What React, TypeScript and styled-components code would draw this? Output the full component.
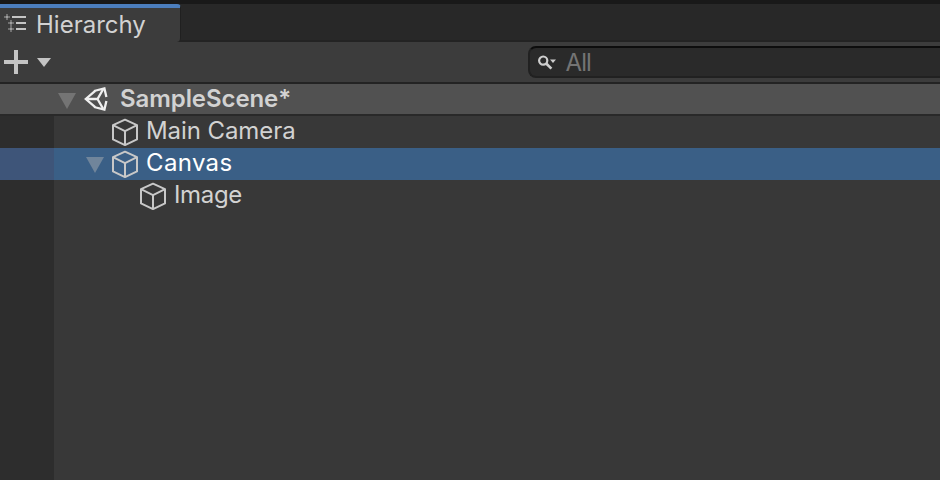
import React from 'react';
import styled, { createGlobalStyle } from 'styled-components';

const GlobalStyle = createGlobalStyle`
  * { box-sizing: border-box; }
  body { margin: 0; background: #383838; overflow: hidden; }
`;

const Panel = styled.div`
  display: flex;
  flex-direction: column;
  width: 940px;
  height: 480px;
  overflow: hidden;
  background: #383838;
  color: #d2d2d2;
  font: 24px/32px Inter, sans-serif;
  white-space: nowrap;
  svg { display: block; flex: none; }
`;

const TabStrip = styled.div`
  display: flex;
  height: 42px;
  flex: none;
  padding-top: 4px;
  background: linear-gradient(#191919 4px, #282828 4px, #282828 40px, #232323 40px);
`;

const Tab = styled.div`
  display: flex;
  align-items: center;
  width: 181px;
  height: 38px;
  padding-left: 4px;
  border-top: 4px solid #4c7ebd;
  border-right: 1px solid #202020;
  border-radius: 0 4px 4px 0;
  background: #3c3c3c;
`;

const Label = styled.span<{ $spacing?: number; $gap?: number; $shift?: number; $bold?: boolean; $color?: string }>`
  margin-left: ${p => p.$gap ?? 0}px;
  margin-top: ${p => p.$shift ?? 0}px;
  letter-spacing: ${p => p.$spacing ?? 0}px;
  font-weight: ${p => (p.$bold ? 600 : 400)};
  color: ${p => p.$color ?? 'inherit'};
`;

const Toolbar = styled.div`
  display: flex;
  justify-content: space-between;
  height: 42px;
  flex: none;
  padding: 4px 0 0 4px;
  border-bottom: 2px solid #232323;
  background: #3c3c3c;
`;

const AddButton = styled.div`
  display: flex;
  align-items: center;
  gap: 9px;
  height: 32px;
`;

const SearchField = styled.div`
  display: flex;
  align-items: center;
  width: 412px;
  height: 32px;
  padding-left: 8px;
  border: 2px solid #212121;
  border-top-color: #0d0d0d;
  border-right: 0;
  border-radius: 8px 0 0 8px;
  background: #2a2a2a;
`;

const SceneRow = styled.div`
  display: flex;
  align-items: center;
  height: 32px;
  flex: none;
  padding-left: 58px;
  border-bottom: 2px solid #292929;
  background: #515151;
`;

const Tree = styled.div`
  flex: 1;
  background: linear-gradient(90deg, #2d2d2d 54px, #383838 54px);
`;

const TreeRow = styled.div<{ $indent: number; $selected?: boolean }>`
  display: flex;
  align-items: center;
  height: 32px;
  padding-left: ${p => p.$indent}px;
  background: ${p => (p.$selected ? 'linear-gradient(90deg, #3e5579 54px, #3a5f86 54px)' : 'transparent')};
`;

const HierarchyIcon = () => (
  <svg width="24" height="20" viewBox="0 0 24 20">
    <g fill="#c4c4c4">
      <path d="M8 4h14v2H8zM12 10h10v2H12zM12 16h10v2H12z" />
      <path d="M2 2h2v6H2zM0 4h6v2H0zM6 8h2v12H6zM4 10h6v2H4zM4 16h6v2H4z" opacity=".4" />
      <path d="M2 4h2v2H2zM6 10h2v2H6zM6 16h2v2H6z" opacity=".55" />
    </g>
  </svg>
);

const PlusIcon = () => (
  <svg width="24" height="24" viewBox="0 0 24 24"><path d="M10 0h4v10h10v4H14v10h-4V14H0v-4h10z" fill="#c4c4c4" /></svg>
);

const MenuArrow = () => (
  <svg width="14" height="9" viewBox="0 0 14 9"><path d="M0 0h14L7 9z" fill="#c4c4c4" /></svg>
);

const SearchIcon = () => (
  <svg width="20" height="16" viewBox="0 0 20 16">
    <circle cx="5.2" cy="5.6" r="4.1" fill="none" stroke="#cecece" strokeWidth="2.2" />
    <path d="m8.2 8.5 5.2 5.2" stroke="#cecece" strokeWidth="2.6" />
    <path d="M12 4.5h6l-3 3.6z" fill="#cecece" />
  </svg>
);

const FoldArrow = ({ color }: { color: string }) => (
  <svg width="18" height="16" viewBox="0 0 18 16"><path d="M0 0h18L9 16z" fill={color} /></svg>
);

const UnityIcon = () => (
  <svg width="24" height="24" viewBox="0 0 24 24">
    <g fill="none" stroke="#f0f0f0" strokeWidth="2.3" strokeLinejoin="miter">
      <path d="M10 4 20.4 1.5 22.4 10M22.4 14l-2 8.5L10 20" />
      <path d="M11.2 3.8 1.8 12l9.4 8.2" />
      <path d="M2 12h11.5L19 2.5M13.5 12l5.5 9.5" />
    </g>
  </svg>
);

const CubeIcon = () => (
  <svg width="28" height="28" viewBox="0 0 28 28">
    <path d="M14 1.7 26 7.2v14.2L14 27.1 2 21.4V7.2zM2 7.2l12 6 12-6M14 13.2v13.9" fill="none" stroke="#c8c8c8" strokeWidth="2" strokeLinejoin="round" />
  </svg>
);

const IconSlot = styled.span<{ $gap?: number; $shift?: number }>`
  display: block;
  margin-left: ${p => p.$gap ?? 0}px;
  margin-top: ${p => p.$shift ?? 0}px;
`;

export default function App() {
  return (
    <Panel>
      <GlobalStyle />
      <TabStrip>
        <Tab>
          <IconSlot $shift={-6}><HierarchyIcon /></IconSlot>
          <Label $gap={8}>Hierarchy</Label>
        </Tab>
      </TabStrip>
      <Toolbar>
        <AddButton><PlusIcon /><MenuArrow /></AddButton>
        <SearchField>
          <IconSlot $shift={2}><SearchIcon /></IconSlot>
          <Label $gap={7.5} $shift={2} $spacing={-0.9} $color="#747474">All</Label>
        </SearchField>
      </Toolbar>
      <SceneRow>
        <IconSlot $shift={3}><FoldArrow color="#747474" /></IconSlot>
        <IconSlot $gap={8}><UnityIcon /></IconSlot>
        <Label $gap={12} $spacing={-0.08} $bold>SampleScene*</Label>
      </SceneRow>
      <Tree>
        <TreeRow $indent={111}>
          <CubeIcon />
          <Label $gap={7} $shift={-2} $spacing={-0.08}>Main Camera</Label>
        </TreeRow>
        <TreeRow $indent={86} $selected>
          <IconSlot $shift={1}><FoldArrow color="#70859b" /></IconSlot>
          <IconSlot $gap={7}><CubeIcon /></IconSlot>
          <Label $gap={7} $shift={-2} $spacing={0.35} $color="#ffffff">Canvas</Label>
        </TreeRow>
        <TreeRow $indent={139}>
          <CubeIcon />
          <Label $gap={7} $shift={-2} $spacing={-0.35}>Image</Label>
        </TreeRow>
      </Tree>
    </Panel>
  );
}
